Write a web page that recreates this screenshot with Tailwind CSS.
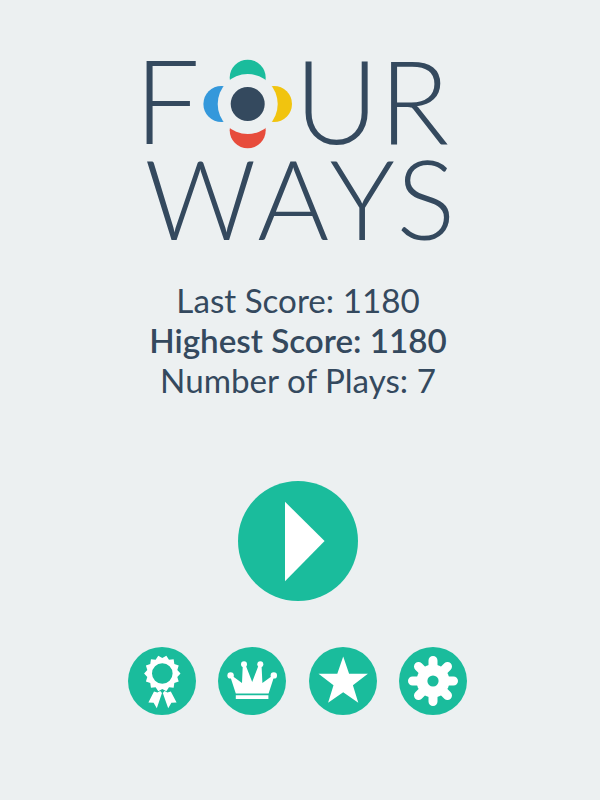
<!DOCTYPE html>
<html lang="en">
<head>
    <meta charset="UTF-8">
    <meta name="viewport" content="width=device-width, initial-scale=1.0">
    <title>Four Ways</title>
    <script src="https://cdn.jsdelivr.net/npm/@tailwindcss/browser@4"></script>
</head>
<body class="bg-[#ecf0f1] font-['Lato',sans-serif] text-[#34495e]">
    <main class="w-[600px] h-[800px] mx-auto flex flex-col items-center">
        <h1 class="h-[270px]">
            <svg class="w-[600px] h-[270px] fill-[#34495e] font-light" viewBox="0 0 600 270">
                <!-- logo: top line, the O is the four petals -->
                <text y="143.7" x="134.6 294.6 379" font-size="115.8">FUR</text>
                <text y="239.7" x="144.6 257.2 329.6 396.5" font-size="109.8">WAYS</text>
                <circle cx="247.7" cy="77.7" r="18" fill="#1abc9c"/>
                <circle cx="274" cy="104" r="18" fill="#f1c40f"/>
                <circle cx="247.7" cy="130.3" r="18" fill="#e74c3c"/>
                <circle cx="221.4" cy="104" r="18" fill="#3498db"/>
                <circle cx="247.7" cy="104" r="30" fill="#ecf0f1"/>
                <circle cx="247.7" cy="104" r="17"/>
            </svg>
        </h1>

        <div id="scores" class="mt-[10px] -ml-1 text-center text-[33.2px] leading-[40px]">
            <p>Last Score: 1180</p>
            <p class="font-semibold">Highest Score: 1180</p>
            <p>Number of Plays: 7</p>
        </div>

        <button type="button" aria-label="Play" class="mt-[81px] mr-[5px] size-[120px] shrink-0">
            <svg class="size-[120px]" viewBox="0 0 120 120">
                <circle cx="60" cy="60" r="60" fill="#1abc9c"/>
                <path d="M47 20.8v79.4L86.6 60z" fill="#fff"/>
            </svg>
        </button>

        <div class="mt-[46px] mr-[5px] flex gap-[22.3px]">
            <button type="button" aria-label="Achievements">
                <svg class="size-[68px]" viewBox="0 0 68 68">
                    <circle cx="34" cy="34" r="34" fill="#1abc9c"/>
                    <path id="rosette" fill="#fff" fill-rule="evenodd" d=""/>
                    <path fill="#fff" d="M26 44.6l3.4 1 2.8-1.6 1.8 1.9-5.2 15.3-3.2-5.4-5.2-.4zM42.800 44.600l-3.400 1-2.800-1.600-1.800 1.900 5.400 15.300 3.200-5.400 5.200-.4z"/>
                </svg>
            </button>
            <button type="button" aria-label="Leaderboard">
                <svg class="size-[68px]" viewBox="0 0 68 68">
                    <circle cx="34" cy="34" r="34" fill="#1abc9c"/>
                    <g fill="#fff">
                        <circle cx="12.6" cy="28.4" r="3.2"/>
                        <circle cx="26" cy="17.3" r="3"/>
                        <circle cx="42.3" cy="17.3" r="3"/>
                        <circle cx="55.8" cy="28.4" r="3.2"/>
                        <path d="M17.8 46.5L12.6 30.5l1.8-1.5L24 36l.8-18.5h2.6l6.800 17.500 6.700-17.500h2.600L44.400 36l9.600-7 1.800 1.500-5.200 16zM17.800 48.200h32.600v3.700H17.800z"/>
                    </g>
                </svg>
            </button>
            <button type="button" aria-label="Rate">
                <svg class="size-[68px]" viewBox="0 0 68 68">
                    <circle cx="34" cy="34" r="34" fill="#1abc9c"/>
                    <path fill="#fff" d="M34.2 9.5l5.9 17.2 18.8.1-15 11.4 5.4 17.6-15.1-10.6-15.1 10.6 5.4-17.6L9.5 26.8l18.8-.1z"/>
                </svg>
            </button>
            <button type="button" aria-label="Settings">
                <svg class="size-[68px]" viewBox="0 0 68 68">
                    <circle cx="34" cy="34" r="34" fill="#1abc9c"/>
                    <g stroke="#fff" stroke-width="9" stroke-linecap="round">
                        <path d="M34 13.5v41M13.5 34h41M19.5 19.5l29 29M48.5 19.5l-29 29"/>
                    </g>
                    <circle cx="34" cy="34" r="16.5" fill="#fff"/>
                    <circle cx="34" cy="34" r="5.6" fill="#1abc9c"/>
                </svg>
            </button>
        </div>
    </main>
</body>
<script>
    // scalloped ring of the award badge
    let points = [];
    for (let i = 0; i < 28; i++) {
        let r = i % 2 ? 18.2 : 15.4;
        let a = i * Math.PI / 14;
        points.push((34.3 + r * Math.sin(a)).toFixed(2) + ' ' + (26.5 - r * Math.cos(a)).toFixed(2));
    }
    document.getElementById('rosette').setAttribute('d',
        'M' + points.join('L') + 'zM24 26.5a10.3 10.3 0 1 0 20.6 0a10.3 10.3 0 1 0-20.6 0z');
</script>
</html>
